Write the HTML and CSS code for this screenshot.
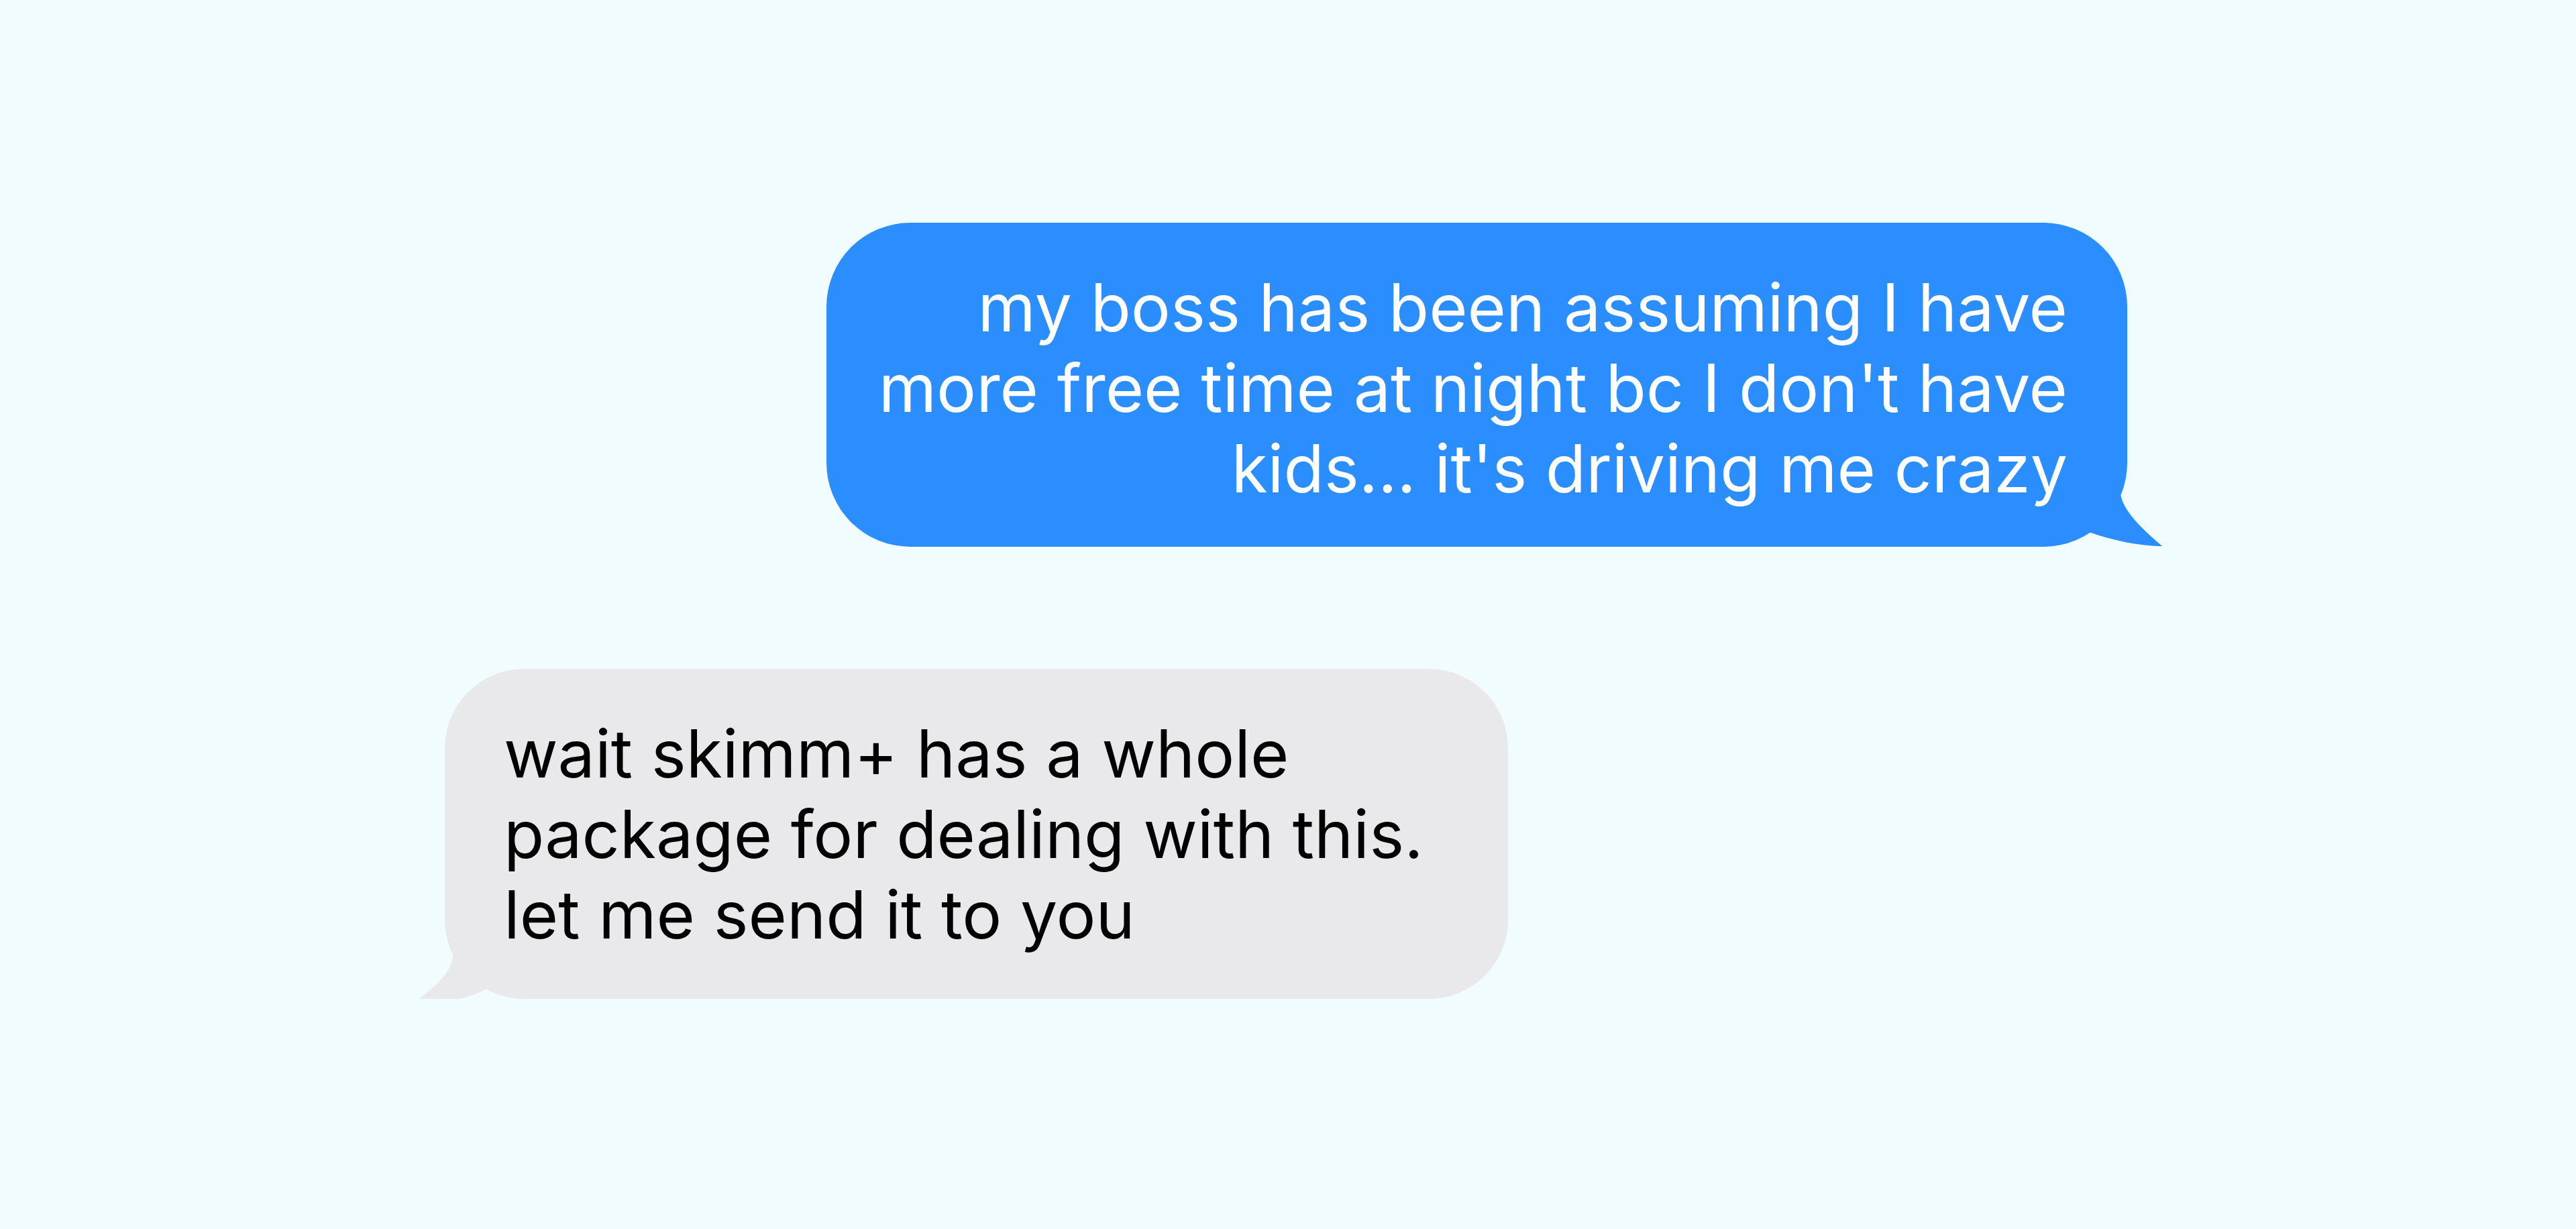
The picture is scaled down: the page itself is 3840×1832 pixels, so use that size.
FILE: index.html
```html
<!DOCTYPE html>
<html lang="en">

<head>
    <meta charset="UTF-8">
    <meta name="viewport" content="width=device-width, initial-scale=1.0">
    <title>Messages</title>
    <link rel="stylesheet" href="styles.css">
</head>

<body>
    <div class="chat">
        <div class="bubble sent">
            <p>my boss has been assuming I have<br>more free time at night bc I don't have<br>kids… it's driving me crazy</p>
            <svg class="tail" width="124" height="86" viewBox="0 0 124 86">
                <path d="M61 6 C64 30, 92 58, 123 84 C90 84, 50 76, 14 63 Z" />
            </svg>
        </div>
        <div class="bubble received">
            <p>wait skimm+ has a whole<br>package for dealing with this.<br>let me send it to you</p>
            <svg class="tail" width="125" height="80" viewBox="0 0 125 80">
                <path d="M65 4 C64 30, 40 50, 3 78 C35 79, 85 70, 114 55 Z" />
            </svg>
        </div>
    </div>
</body>

</html>
```

FILE: styles.css
```css
body {
    margin: 0;
    background-color: #f0fcfe;
    font-family: Inter, "Noto Sans", sans-serif;
}

.chat {
    padding: 332px 669px 0 663px;
    display: flex;
    flex-direction: column;
    gap: 182px;
}

.bubble {
    position: relative;
    box-sizing: border-box;
}

.bubble p {
    margin: 0;
    font-size: 98.5px;
    line-height: 120px;
}

.bubble .tail {
    position: absolute;
    bottom: -1px;
}

.sent {
    align-self: flex-end;
    width: 1939px;
    height: 483px;
    padding: 67px 89px 0 0;
    background-color: #2a8eff;
    color: #fff;
    text-align: right;
    border-radius: 125px;
}

.sent .tail {
    right: -53px;
    fill: #2a8eff;
}

.received {
    align-self: flex-start;
    width: 1585px;
    height: 492px;
    padding: 67px 0 0 88px;
    background-color: #e9e9eb;
    color: #000;
    border-radius: 118px;
}

.received .tail {
    left: -53px;
    bottom: -11px;
    fill: #e9e9eb;
}
```
